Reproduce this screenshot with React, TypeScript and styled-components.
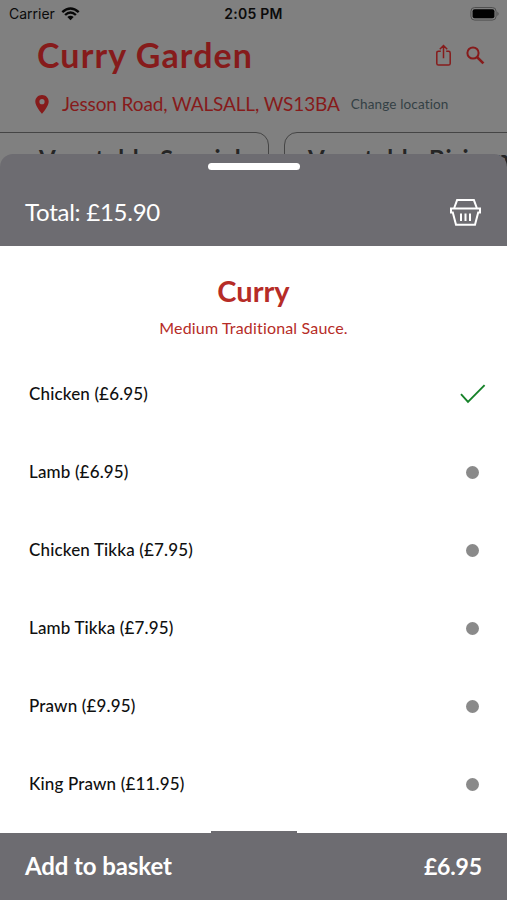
import React from "react";
import styled, { createGlobalStyle } from "styled-components";

const Global = createGlobalStyle`
  * { box-sizing: border-box; }
  body { margin: 0; background: #808080; }
`;

const Screen = styled.div`
  position: relative;
  width: 507px;
  height: 900px;
  overflow: hidden;
  display: flex;
  flex-direction: column;
  background: #808080;
  font-family: Lato, "Open Sans", sans-serif;
  font-variant-ligatures: none;
`;

const Label = styled.span<{ $size: number; $weight?: number; $color: string; $track?: number }>`
  font-size: ${(p) => p.$size}px;
  font-weight: ${(p) => p.$weight ?? 400};
  color: ${(p) => p.$color};
  letter-spacing: ${(p) => p.$track ?? 0}px;
  line-height: 1.2;
  white-space: nowrap;
`;

const StatusBar = styled.div`
  display: grid;
  grid-template-columns: 1fr auto 1fr;
  align-items: center;
  height: 28px;
  padding: 0 7px 0 9px;
  color: #0b0b0b;
  font: 400 14px/18px Inter, sans-serif;
`;

const Carrier = styled.div`
  display: flex;
  align-items: center;
  gap: 6px;
`;

const Clock = styled.div`
  font-weight: 600;
  margin-left: -2px;
  letter-spacing: 0.25px;
`;

const Battery = styled.div`
  display: flex;
  justify-content: flex-end;
`;

const TitleRow = styled.div`
  display: flex;
  align-items: center;
  justify-content: space-between;
  height: 55px;
  padding: 0 22px 0 37px;
`;

const Actions = styled.div`
  display: flex;
  align-items: center;
  gap: 15px;
`;

const LocationRow = styled.div`
  display: flex;
  align-items: center;
  height: 42px;
  padding-left: 35px;
`;

const Address = styled.div`
  margin: 0 11px 0 13px;
`;

const Categories = styled.div`
  display: flex;
  gap: 15px;
  margin: 7px 0 0 -16px;
`;

const Category = styled.div`
  flex: 0 0 285px;
  height: 60px;
  border: 1.5px solid #454545;
  border-radius: 13px;
  padding: 12px 0 0 54px;

  & + & {
    padding-left: 23px;
  }
`;

const Sheet = styled.section`
  position: absolute;
  inset: 154px 0 0;
  display: flex;
  flex-direction: column;
`;

const SheetHeader = styled.header`
  height: 92px;
  background: #6d6c71;
  border-radius: 13px 13px 0 0;
  display: flex;
  flex-direction: column;
  align-items: center;
  padding: 9px 26px 0 25px;
`;

const Handle = styled.div`
  width: 92px;
  height: 7px;
  border-radius: 4px;
  background: #fff;
  margin-left: 1px;
`;

const TotalRow = styled.div`
  width: 100%;
  display: flex;
  justify-content: space-between;
  align-items: center;
  height: 40px;
  margin-top: 22px;
`;

const Options = styled.main`
  flex: 1;
  background: #fff;
  display: flex;
  flex-direction: column;
`;

const Heading = styled.div`
  display: flex;
  flex-direction: column;
  align-items: center;
  height: 109px;
  padding-top: 28px;
  gap: 9px;
`;

const Option = styled.div`
  height: 78.1px;
  display: flex;
  align-items: center;
  justify-content: space-between;
  padding: 0 21px 0 29px;
`;

const Marker = styled.div`
  width: 27px;
  display: flex;
  justify-content: center;
`;

const Dot = styled.div`
  width: 13px;
  height: 13px;
  border-radius: 50%;
  background: #8a8a8a;
`;

const Footer = styled.footer`
  position: relative;
  height: 67px;
  background: #6d6c71;
  display: flex;
  justify-content: space-between;
  align-items: center;
  padding: 0 25px;
`;

const FooterTab = styled.div`
  position: absolute;
  top: -2px;
  left: 211px;
  width: 86px;
  height: 2px;
  background: #6d6c71;
`;

const red = "#861b1b";
const crimson = "#b62c27";

const WifiIcon = () => (
  <svg width="19" height="15" viewBox="0 0 19 15">
    <path d="M1.3 5.2Q9.5-2.4 17.7 5.2M4.1 8Q9.5 2.9 14.9 8" fill="none" stroke="#080808" strokeWidth="2.4" />
    <path d="M6.3 10.1Q9.5 7.3 12.7 10.1L9.5 13.3Z" fill="#080808" />
  </svg>
);

const BatteryIcon = () => (
  <svg width="31" height="15" viewBox="0 0 31 15">
    <rect x="1.9" y=".5" width="25.2" height="12.6" rx="3.8" fill="none" stroke="#505050" />
    <rect x="3.6" y="2.3" width="21.8" height="9" rx="2" fill="#020202" />
    <path d="M28.4 4.5Q30.8 6.8 28.4 9.1Z" fill="#505050" />
  </svg>
);

const ShareIcon = () => (
  <svg width="15" height="23" viewBox="0 0 15 23" fill="none" stroke={red} strokeWidth="1.5">
    <path d="M4.8 7.2H2.5Q.8 7.2 .8 8.9V19.4Q.8 21.1 2.5 21.1H12.5Q14.2 21.1 14.2 19.4V8.9Q14.2 7.2 12.5 7.2H10.2M7.5 14.2V1.5M3.8 5.2L7.5 1.5L11.2 5.2" />
  </svg>
);

const SearchIcon = () => (
  <svg width="19" height="19" viewBox="0 0 19 19" fill="none" stroke={red}>
    <circle cx="7" cy="7" r="5.6" strokeWidth="2" />
    <path d="M11.1 11.1L17.4 17.4" strokeWidth="2.7" />
  </svg>
);

const PinIcon = () => (
  <svg width="14" height="19" viewBox="0 0 14 19">
    <path fillRule="evenodd" fill={red} d="M7 0C3.1 0 .3 2.9.3 6.7C.3 11.2 7 18.7 7 18.7S13.7 11.2 13.7 6.7C13.7 2.9 10.9 0 7 0ZM7 4.1A2.6 2.6 0 1 1 7 9.3A2.6 2.6 0 0 1 7 4.1Z" />
  </svg>
);

const BasketIcon = () => (
  <svg width="31" height="27" viewBox="0 0 31 27" fill="none" stroke="#fff" strokeWidth="2">
    <path d="M4.2 9L7.1 1.1H23.9L26.8 9" />
    <path d="M1 9.6H30V13.5H28.2L25 25.7H6L2.8 13.5H1Z" />
    <path d="M11 14.4V22M15.5 14.4V22M20 14.4V22" />
  </svg>
);

const CheckIcon = () => (
  <svg width="26" height="20" viewBox="0 0 26 20">
    <path d="M1 10.1L8 17.8L24.6 1.2" fill="none" stroke="#168229" strokeWidth="1.9" />
  </svg>
);

const options = [
  { name: "Chicken (£6.95)", selected: true },
  { name: "Lamb (£6.95)" },
  { name: "Chicken Tikka (£7.95)" },
  { name: "Lamb Tikka (£7.95)" },
  { name: "Prawn (£9.95)" },
  { name: "King Prawn (£11.95)" },
];

export default function App() {
  return (
    <Screen>
      <Global />
      <StatusBar>
        <Carrier>Carrier <WifiIcon /></Carrier>
        <Clock>2:05 PM</Clock>
        <Battery><BatteryIcon /></Battery>
      </StatusBar>
      <TitleRow>
        <Label $size={34} $weight={700} $color={red} $track={1.1}>Curry Garden</Label>
        <Actions><ShareIcon /><SearchIcon /></Actions>
      </TitleRow>
      <LocationRow>
        <PinIcon />
        <Address><Label $size={19} $color={red} $track={-0.12}>Jesson Road, WALSALL, WS13BA</Label></Address>
        <Label $size={13.5} $color="#344045" $track={0.15}>Change location</Label>
      </LocationRow>
      <Categories>
        <Category><Label $size={24} $weight={700} $color="#252525" $track={0.9}>Vegetable Special</Label></Category>
        <Category><Label $size={24} $weight={700} $color="#252525" $track={0.9}>Vegetable Biriyani</Label></Category>
      </Categories>
      <Sheet>
        <SheetHeader>
          <Handle />
          <TotalRow>
            <Label $size={24} $color="#fff" $track={-0.25}>Total: £15.90</Label>
            <BasketIcon />
          </TotalRow>
        </SheetHeader>
        <Options>
          <Heading>
            <Label $size={29} $weight={700} $color={crimson}>Curry</Label>
            <Label $size={16} $color={crimson} $track={0.17}>Medium Traditional Sauce.</Label>
          </Heading>
          {options.map((o) => (
            <Option key={o.name}>
              <Label $size={17} $weight={500} $color="#101010" $track={0.15}>{o.name}</Label>
              <Marker>{o.selected ? <CheckIcon /> : <Dot />}</Marker>
            </Option>
          ))}
        </Options>
        <Footer>
          <FooterTab />
          <Label $size={24} $weight={700} $color="#fff" $track={-0.1}>Add to basket</Label>
          <Label $size={23} $weight={700} $color="#fff" $track={-0.15}>£6.95</Label>
        </Footer>
      </Sheet>
    </Screen>
  );
}
